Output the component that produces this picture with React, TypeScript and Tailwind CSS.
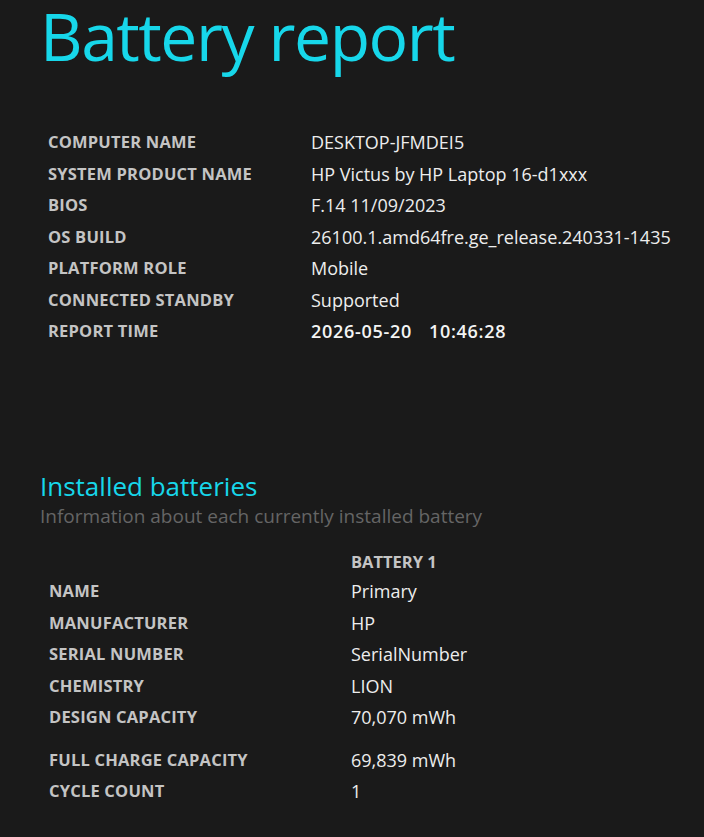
import React from "react";

const sys: [string, string][] = [
  ["COMPUTER NAME", "DESKTOP-JFMDEI5"],
  ["SYSTEM PRODUCT NAME", "HP Victus by HP Laptop 16-d1xxx"],
  ["BIOS", "F.14 11/09/2023"],
  ["OS BUILD", "26100.1.amd64fre.ge_release.240331-1435"],
  ["PLATFORM ROLE", "Mobile"],
  ["CONNECTED STANDBY", "Supported"],
];

const bat: [string, string, string][] = [
  ["NAME", "Primary", "h-[32px]"],
  ["MANUFACTURER", "HP", "h-[31.5px]"],
  ["SERIAL NUMBER", "SerialNumber", "h-[31.5px]"],
  ["CHEMISTRY", "LION", "h-[31.5px]"],
  ["DESIGN CAPACITY", "70,070 mWh", "h-[31.5px]"],
  ["FULL CHARGE CAPACITY", "69,839 mWh", "h-[31.5px] mt-[11px]"],
  ["CYCLE COUNT", "1", "h-[31.5px]"],
];

export default function App() {
  return (
    <div
      className="min-h-[837px] w-[704px] bg-[#1a1a1a] overflow-hidden"
      style={{ fontFamily: '"Open Sans", "Noto Sans", sans-serif' }}
    >
      <div className="pl-[40px]">
        <h1 className="text-[66px] leading-[70px] font-normal text-[#17d7ea] tracking-[-1.5px]">
          Battery report
        </h1>
        <div className="mt-[57px] pl-[8px]">
          {sys.map(([k, v]) => (
            <div key={k} className="flex items-center h-[31.5px]">
              <div className="w-[263px] shrink-0 text-[16.5px] font-bold text-[#c4c4c4] tracking-[0.2px]">
                {k}
              </div>
              <div className="text-[18px] text-[#ededed]">{v}</div>
            </div>
          ))}
          <div className="flex items-center h-[31.5px]">
            <div className="w-[263px] shrink-0 text-[16.5px] font-bold text-[#c4c4c4] tracking-[0.2px]">
              REPORT TIME
            </div>
            <div className="flex text-[18px] font-semibold text-[#f4f4f4] tracking-[0.7px]">
              <span className="w-[118px]">2026-05-20</span>
              <span>10:46:28</span>
            </div>
          </div>
        </div>
        <div className="mt-[123px]">
          <h2 className="text-[26px] leading-[30px] text-[#17d7ea]">
            Installed batteries
          </h2>
          <div className="text-[19px] leading-[30px] text-[#656565]">
            Information about each currently installed battery
          </div>
        </div>
        <div className="mt-[19px] pl-[9px]">
          <div className="flex items-center h-[26px]">
            <div className="w-[302px] shrink-0" />
            <div className="text-[16.5px] font-bold text-[#c4c4c4]">BATTERY 1</div>
          </div>
          {bat.map(([k, v, h]) => (
            <div key={k} className={"flex items-center " + h}>
              <div className="w-[302px] shrink-0 text-[16.5px] font-bold text-[#c4c4c4] tracking-[0.2px]">
                {k}
              </div>
              <div className="text-[18px] text-[#ededed]">{v}</div>
            </div>
          ))}
        </div>
      </div>
    </div>
  );
}
